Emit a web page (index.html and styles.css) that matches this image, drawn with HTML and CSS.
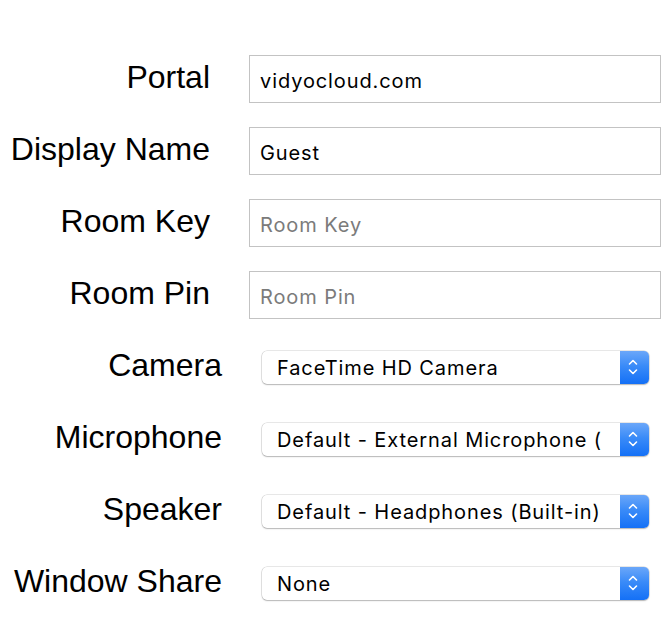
FILE: index.html
```html
<!DOCTYPE html>
<html lang="en">
<head>
<meta charset="utf-8">
<title>Join</title>
<link rel="stylesheet" href="styles.css">
</head>
<body>
<form class="form">
  <div class="row text-row">
    <label class="label" for="portal">Portal</label>
    <input class="field" id="portal" type="text" value="vidyocloud.com">
  </div>
  <div class="row text-row">
    <label class="label" for="name">Display Name</label>
    <input class="field" id="name" type="text" value="Guest">
  </div>
  <div class="row text-row">
    <label class="label" for="key">Room Key</label>
    <input class="field" id="key" type="text" placeholder="Room Key">
  </div>
  <div class="row text-row">
    <label class="label" for="pin">Room Pin</label>
    <input class="field" id="pin" type="text" placeholder="Room Pin">
  </div>
  <div class="row select-row">
    <span class="label">Camera</span>
    <div class="select"><span class="select-value">FaceTime HD Camera</span><span class="select-btn"><svg width="12" height="20" viewBox="0 0 12 20"><path d="M2.5 7 L6 3.5 L9.5 7 M2.5 13 L6 16.5 L9.5 13" fill="none" stroke="#fff" stroke-width="1.6" stroke-linecap="round" stroke-linejoin="round"/></svg></span></div>
  </div>
  <div class="row select-row">
    <span class="label">Microphone</span>
    <div class="select"><span class="select-value">Default - External Microphone (</span><span class="select-btn"><svg width="12" height="20" viewBox="0 0 12 20"><path d="M2.5 7 L6 3.5 L9.5 7 M2.5 13 L6 16.5 L9.5 13" fill="none" stroke="#fff" stroke-width="1.6" stroke-linecap="round" stroke-linejoin="round"/></svg></span></div>
  </div>
  <div class="row select-row">
    <span class="label">Speaker</span>
    <div class="select"><span class="select-value">Default - Headphones (Built-in)</span><span class="select-btn"><svg width="12" height="20" viewBox="0 0 12 20"><path d="M2.5 7 L6 3.5 L9.5 7 M2.5 13 L6 16.5 L9.5 13" fill="none" stroke="#fff" stroke-width="1.6" stroke-linecap="round" stroke-linejoin="round"/></svg></span></div>
  </div>
  <div class="row select-row">
    <span class="label">Window Share</span>
    <div class="select"><span class="select-value">None</span><span class="select-btn"><svg width="12" height="20" viewBox="0 0 12 20"><path d="M2.5 7 L6 3.5 L9.5 7 M2.5 13 L6 16.5 L9.5 13" fill="none" stroke="#fff" stroke-width="1.6" stroke-linecap="round" stroke-linejoin="round"/></svg></span></div>
  </div>
</form>
</body>
</html>
```

FILE: styles.css
```css
html, body {
  margin: 0;
  padding: 0;
  background: #ffffff;
}
body {
  font-family: "Liberation Sans", Arial, sans-serif;
  color: #000;
}
.form {
  display: flex;
  flex-direction: column;
  padding-top: 43px;
}
.row {
  display: flex;
  align-items: center;
  height: 72px;
}
.label {
  font-size: 32px;
  text-align: right;
  white-space: nowrap;
  padding-bottom: 3px;
}
.text-row .label {
  width: 210px;
  margin-right: 39px;
}
.select-row .label {
  width: 222px;
  margin-right: 40px;
}
.field {
  box-sizing: border-box;
  width: 412px;
  height: 48px;
  margin: 0;
  border: 1px solid #c3c3c3;
  border-radius: 0;
  padding: 3px 10px 0 10px;
  font-family: "Inter", "Noto Sans", sans-serif;
  font-size: 20px;
  letter-spacing: 0.9px;
  color: #000;
  background: #fff;
  outline: none;
}
.field::placeholder {
  color: #7b7b7b;
}
.select {
  box-sizing: border-box;
  display: flex;
  align-items: stretch;
  width: 387px;
  height: 33px;
  border-radius: 5px;
  background: #fff;
  box-shadow: 0 0 0 0.5px rgba(0,0,0,0.18), 0 1px 1.5px rgba(0,0,0,0.22);
  overflow: hidden;
}
.select-value {
  flex: 1;
  display: flex;
  align-items: center;
  padding-left: 15px;
  padding-top: 2px;
  font-family: "Inter", "Noto Sans", sans-serif;
  font-size: 20px;
  letter-spacing: 0.9px;
  white-space: nowrap;
  overflow: hidden;
}
.select-btn {
  width: 29px;
  display: flex;
  align-items: center;
  justify-content: center;
  padding-right: 3px;
  box-sizing: border-box;
  background: linear-gradient(to bottom, #6ba7f9 0%, #3a8bf8 45%, #1470f6 100%);
}
```
